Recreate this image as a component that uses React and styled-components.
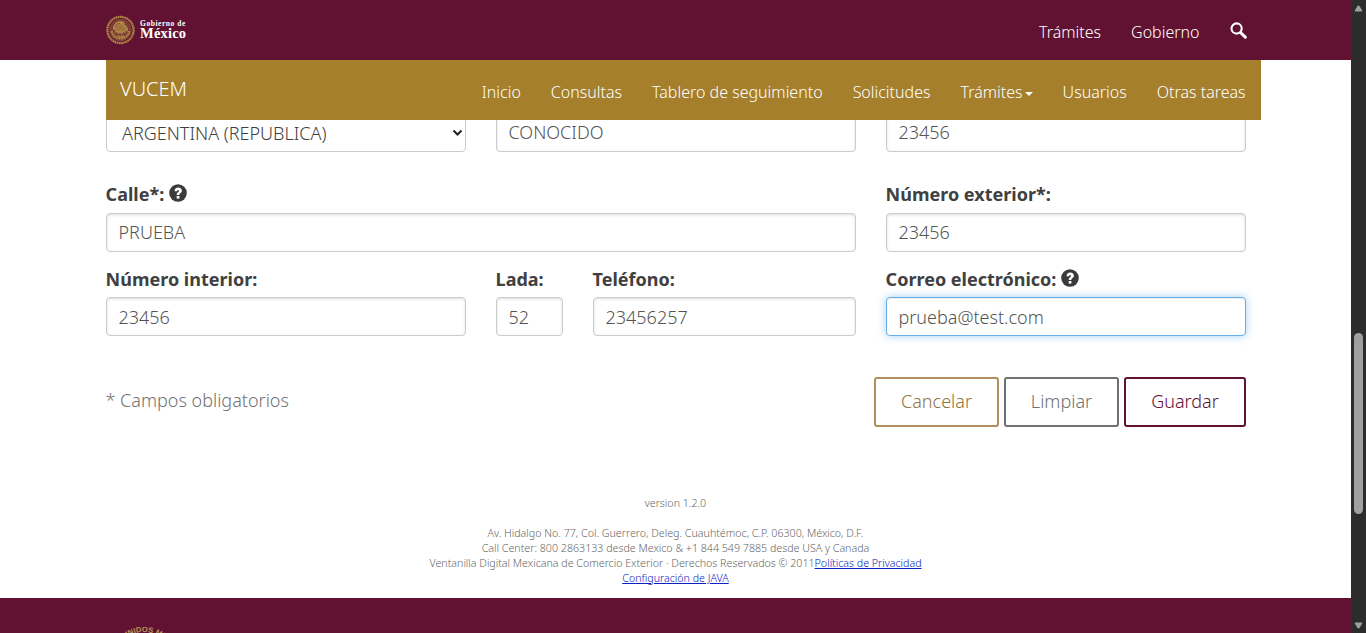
import React from 'react';
import styled, { createGlobalStyle, css } from 'styled-components';

const WINE = '#611232';
const GOLD = '#a57f2c';

const GlobalStyle = createGlobalStyle`
  *, *::before, *::after { box-sizing: border-box; }
  html, body { margin: 0; height: 100%; overflow: hidden; }
  body {
    font-family: "Noto Sans", "Open Sans", sans-serif;
    font-size: 18px;
    font-weight: 300;
    color: #404041;
    background: #fff;
  }
`;

const Window = styled.div`
  display: flex;
  width: 1366px;
  height: 633px;
  overflow: hidden;
`;

const Page = styled.div`
  flex: 1;
  min-width: 0;
  display: flex;
  flex-direction: column;
`;

const Header = styled.header`
  height: 60px;
  flex: none;
  padding: 0 104.5px 0 106px;
  display: flex;
  align-items: center;
  justify-content: space-between;
  background: ${WINE};
`;

const Brand = styled.a`
  display: flex;
  align-items: center;
  gap: 5px;
  margin-top: -1px;
  color: #fff;
`;

const BrandText = styled.span`
  display: flex;
  flex-direction: column;
  font-family: "Liberation Serif", serif;
  font-weight: 700;
  white-space: nowrap;
`;

const BrandSmall = styled.span`
  font-size: 7.5px;
  line-height: 8px;
  letter-spacing: 0.55px;
`;

const BrandLarge = styled.span`
  font-size: 14.5px;
  line-height: 11px;
  letter-spacing: 0.2px;
`;

const TopLinks = styled.nav`
  display: flex;
  align-items: center;
  gap: 30px;
  padding-top: 4px;
`;

const NavLink = styled.a`
  display: inline-flex;
  align-items: center;
  font-size: 16px;
  line-height: 24px;
  color: #fff;
  white-space: nowrap;
`;

const Caret = styled.span`
  margin: 3px 0 0 2px;
  border-top: 4px solid #fff;
  border-left: 4px solid transparent;
  border-right: 4px solid transparent;
`;

const SubNav = styled.nav`
  position: relative;
  z-index: 1;
  height: 60px;
  flex: none;
  margin: 0 90px 0 106px;
  padding: 0 15.4px 0 14px;
  display: flex;
  justify-content: space-between;
  background: ${GOLD};
`;

const SubNavTitle = styled.span`
  padding-top: 16px;
  font-size: 20px;
  line-height: 26px;
  color: #fff;
`;

const SubNavLinks = styled.div`
  display: flex;
  gap: 30px;
  padding-top: 20px;
  height: 44px;
`;

const Form = styled.form`
  flex: none;
  width: 1140px;
  margin: -7px 0 0 106px;
`;

const FormRow = styled.div`
  display: grid;
  grid-template-columns: ${(p) => p.$columns};
  column-gap: 30px;
  margin-bottom: ${(p) => p.$gap}px;
`;

const Field = styled.div`
  min-width: 0;
`;

const Label = styled.label`
  display: flex;
  align-items: center;
  gap: 5px;
  height: 24px;
  margin: 0 0 ${(p) => p.$space || 7}px -0.4px;
  line-height: 24px;
  font-weight: 700;
  white-space: nowrap;

  svg { margin-top: -2px; }
`;

const control = css`
  display: block;
  width: 100%;
  height: 39px;
  border: 1px solid #ccc;
  border-radius: 4px;
  background: #fff;
  color: #555;
  font: inherit;
  outline: none;
`;

const Input = styled.input`
  ${control}
  padding: ${(p) => (p.$raised ? '5px 11.5px 7px' : '6px 11.5px')};
  box-shadow: inset 0 1px 3px rgba(0, 0, 0, 0.14);

  ${(p) => p.$active && css`
    border-color: #66afe9;
    box-shadow: inset 0 1px 1px rgba(0, 0, 0, 0.075), 0 0 8px rgba(102, 175, 233, 0.6);
  `}
`;

const Select = styled.div`
  ${control}
  display: flex;
  align-items: center;
  justify-content: space-between;
  padding: 0 2px 0 15px;
  color: #404041;
`;

const Actions = styled.div`
  display: flex;
  align-items: center;
  justify-content: space-between;
  height: 50px;
`;

const Required = styled.span`
  margin: -5px 0 0 -0.5px;
  color: #727272;
`;

const Buttons = styled.div`
  display: flex;
  gap: 5px;
`;

const Button = styled.button`
  width: ${(p) => p.$width}px;
  height: 50px;
  padding: 0 0 2px;
  border: 2px solid ${(p) => p.$color};
  border-radius: 3px;
  background: #fff;
  color: ${(p) => p.$text || p.$color};
  font: inherit;
`;

const Legal = styled.div`
  margin-top: 69px;
  height: 102px;
  flex: none;
  text-align: center;
  font-size: 10.67px;
  line-height: 15px;
  color: #666;

  p { margin: 0 0 15px; }
`;

const LegalLink = styled.a`
  color: #0a23c0;
  text-decoration: underline;
`;

const Footer = styled.footer`
  flex: 1;
  min-height: 0;
  overflow: hidden;
  padding: 29px 0 0 107px;
  background: ${WINE};
`;

const ScrollBar = styled.div`
  width: 15px;
  flex: none;
  display: flex;
  flex-direction: column;
  align-items: center;
  padding: 5px 0 4px;
  background: #2c2c2c;
`;

const ScrollThumb = styled.div`
  width: 9px;
  height: 181px;
  margin: 321px 0 auto;
  border-radius: 5px;
  background: #9f9f9f;
`;

const Arrow = ({ down }) => (
  <svg width="9" height="7" viewBox="0 0 9 7" display="block">
    <path d={down ? 'M1 1h7L5 6H4z' : 'M1 6h7L5 1H4z'} fill="#9f9f9f" stroke="#9f9f9f" strokeLinejoin="round" />
  </svg>
);

const SearchSvg = styled.svg`
  margin-top: -3px;
`;

const SearchIcon = () => (
  <SearchSvg width="17" height="17" viewBox="0 0 17 17">
    <circle cx="6.6" cy="6.5" r="5.1" fill="none" stroke="#fff" strokeWidth="2.1" />
    <path d="M10.5 10.5l4.8 4.6" stroke="#fff" strokeWidth="3" strokeLinecap="round" />
  </SearchSvg>
);

const HelpIcon = () => (
  <svg width="18" height="18" viewBox="0 0 18 18">
    <circle cx="9" cy="9" r="8.8" fill="#3b3b3c" />
    <path d="M5.6 7.2C5.6 4.800 7 3.600 9.200 3.600s3.700 1.300 3.700 3.200c0 2.300-2.500 2.200-2.500 4.100H7.700c0-2.800 2.200-2.600 2.200-4 0-.5-.3-.8-.9-.8s-.9.4-.9 1.100z" fill="#fff" />
    <path d="M7.700 12h2.700v2.600H7.700z" fill="#fff" />
  </svg>
);

const SelectArrow = () => (
  <svg width="11" height="8" viewBox="0 0 11 8">
    <path d="M1.500 1.500l4 4 4-4" fill="none" stroke="#222" strokeWidth="2" />
  </svg>
);

const Seal = () => (
  <svg width="29" height="30" viewBox="0 0 29 30">
    <circle cx="14.5" cy="15" r="10.500" fill="#ae8745" opacity=".35" />
    <g fill="none" stroke="#ae8745">
      <circle cx="14.5" cy="15" r="13.1" strokeWidth="2.200" strokeDasharray="1.800 .45" />
      <circle cx="14.5" cy="15" r="10.8" strokeWidth=".6" opacity=".7" />
      <path d="M5.6 16c1 4.200 4 7.400 8.900 7.400s8-3.200 8.900-7.400" strokeWidth="2.200" strokeDasharray="2 .6" />
      <path d="M11.500 20.500c2 1 4.500 1 6.500 0M12 22h6" strokeWidth="1" />
    </g>
    <path
      d="M7 14.500c-.5-4 2.500-8 7-8.500 2.500-.2 4.500 1 5.200 2.600l-2 .2 2.600 1.500c2 1.600 2.800 4.400 1.600 6.700l-2.200-1.700.4 3.200-2.300-1.500-1.300 2.700-1.800-2-2.500 1.800-.2-2.600-3 1 1.200-2.400z"
      fill="#ae8745"
    />
    <g stroke={WINE} strokeWidth=".5" fill="none">
      <path d="M9 13.500l5-5.500M10.500 14.800l5.500-5M12.500 15.500l5-4M15.500 16l4-3M9 11l3-3" />
    </g>
  </svg>
);

const FooterSeal = () => (
  <svg width="74" height="74" viewBox="0 0 74 74" display="block">
    <defs>
      <path id="rim" d="M5 37a32 32 0 0 1 64 0" />
    </defs>
    <text fill="#b8945a" fontSize="7.700" fontWeight="700" fontFamily="Liberation Sans, sans-serif">
      <textPath href="#rim" startOffset="49%" textAnchor="middle">ESTADOS UNIDOS MEXICANOS</textPath>
    </text>
  </svg>
);

const TextField = ({ label, help, value, active, space, raised }) => (
  <Field>
    {label && (
      <Label $space={space}>
        {label}
        {help && <HelpIcon />}
      </Label>
    )}
    <Input value={value} $active={active} $raised={raised} readOnly />
  </Field>
);

export default function App() {
  return (
    <>
      <GlobalStyle />
      <Window>
        <Page>
          <Header>
            <Brand>
              <Seal />
              <BrandText>
                <BrandSmall>Gobierno de</BrandSmall>
                <BrandLarge>México</BrandLarge>
              </BrandText>
            </Brand>
            <TopLinks>
              <NavLink>Trámites</NavLink>
              <NavLink>Gobierno</NavLink>
              <SearchIcon />
            </TopLinks>
          </Header>
          <SubNav>
            <SubNavTitle>VUCEM</SubNavTitle>
            <SubNavLinks>
              <NavLink>Inicio</NavLink>
              <NavLink>Consultas</NavLink>
              <NavLink>Tablero de seguimiento</NavLink>
              <NavLink>Solicitudes</NavLink>
              <NavLink>Trámites<Caret /></NavLink>
              <NavLink>Usuarios</NavLink>
              <NavLink>Otras tareas</NavLink>
            </SubNavLinks>
          </SubNav>
          <Form>
            <FormRow $columns="360px 360px 360px" $gap={30}>
              <Select>
                ARGENTINA (REPUBLICA)
                <SelectArrow />
              </Select>
              <TextField value="CONOCIDO" raised />
              <TextField value="23456" raised />
            </FormRow>
            <FormRow $columns="750px 360px" $gap={15}>
              <TextField label="Calle*:" help value="PRUEBA" raised />
              <TextField label="Número exterior*:" value="23456" raised />
            </FormRow>
            <FormRow $columns="360px 67px 263px 360px" $gap={41}>
              <TextField label="Número interior:" value="23456" space={6} />
              <TextField label="Lada:" value="52" space={6} />
              <TextField label="Teléfono:" value="23456257" space={6} />
              <TextField label="Correo electrónico:" help value="prueba@test.com" active space={6} />
            </FormRow>
            <Actions>
              <Required>* Campos obligatorios</Required>
              <Buttons>
                <Button type="button" $width={125} $color="#b38e5d" $text="#8f7340">Cancelar</Button>
                <Button type="button" $width={115} $color="#6f7271">Limpiar</Button>
                <Button type="button" $width={122} $color={WINE}>Guardar</Button>
              </Buttons>
            </Actions>
          </Form>
          <Legal>
            <p>version 1.2.0</p>
            Av. Hidalgo No. 77, Col. Guerrero, Deleg. Cuauhtémoc, C.P. 06300, México, D.F.<br />
            Call Center: 800 2863133 desde Mexico &amp; +1 844 549 7885 desde USA y Canada<br />
            Ventanilla Digital Mexicana de Comercio Exterior · Derechos Reservados © 2011<LegalLink>Políticas de Privacidad</LegalLink><br />
            <LegalLink>Configuración de JAVA</LegalLink>
          </Legal>
          <Footer>
            <FooterSeal />
          </Footer>
        </Page>
        <ScrollBar>
          <Arrow />
          <ScrollThumb />
          <Arrow down />
        </ScrollBar>
      </Window>
    </>
  );
}
